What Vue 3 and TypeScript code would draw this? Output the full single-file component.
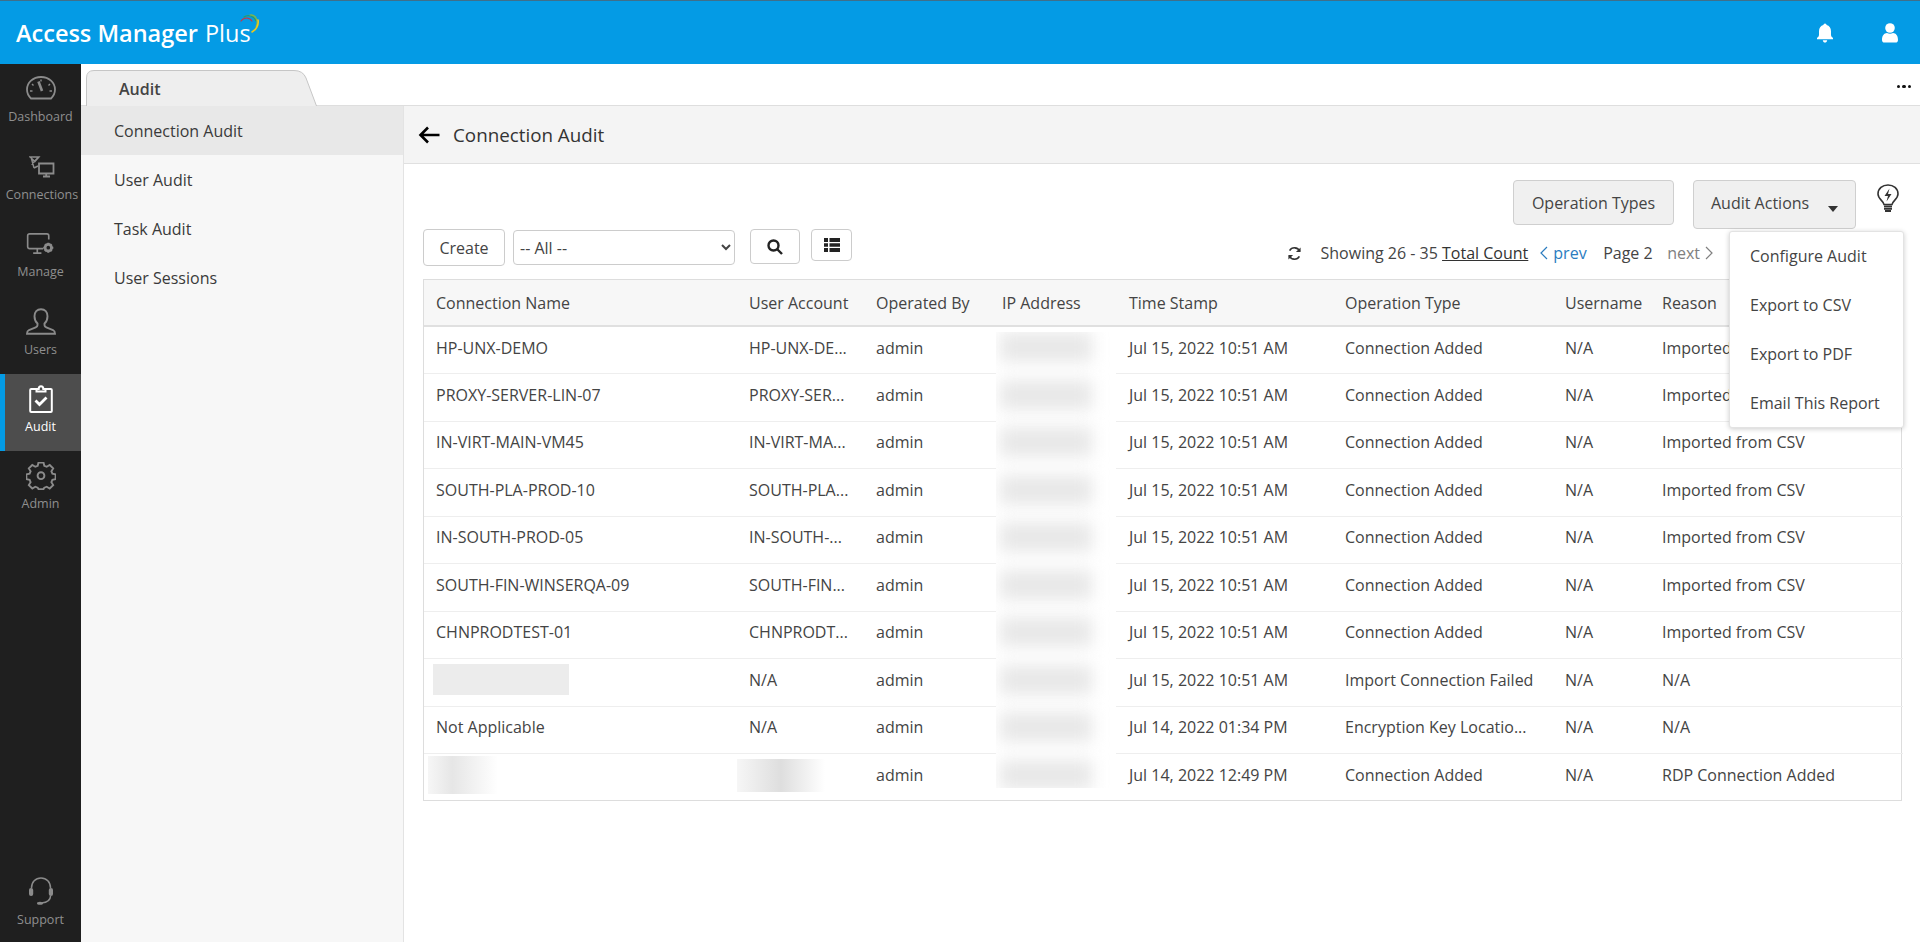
<script setup lang="ts">
interface Row {
  name: string
  account: string
  by: string
  time: string
  op: string
  user: string
  reason: string
  nameBlur?: string
  accountBlur?: boolean
}
const columns = ['Connection Name', 'User Account', 'Operated By', 'IP Address', 'Time Stamp', 'Operation Type', 'Username', 'Reason']
const widths = [313, 127, 126, 127, 216, 220, 97, 253]
const added = { by: 'admin', time: 'Jul 15, 2022 10:51 AM', op: 'Connection Added', user: 'N/A', reason: 'Imported from CSV' }
const rows: Row[] = [
  { name: 'HP-UNX-DEMO', account: 'HP-UNX-DE...', ...added },
  { name: 'PROXY-SERVER-LIN-07', account: 'PROXY-SER...', ...added },
  { name: 'IN-VIRT-MAIN-VM45', account: 'IN-VIRT-MA...', ...added },
  { name: 'SOUTH-PLA-PROD-10', account: 'SOUTH-PLA...', ...added },
  { name: 'IN-SOUTH-PROD-05', account: 'IN-SOUTH-...', ...added },
  { name: 'SOUTH-FIN-WINSERQA-09', account: 'SOUTH-FIN...', ...added },
  { name: 'CHNPRODTEST-01', account: 'CHNPRODT...', ...added },
  { name: '', nameBlur: 'wide', account: 'N/A', by: 'admin', time: 'Jul 15, 2022 10:51 AM', op: 'Import Connection Failed', user: 'N/A', reason: 'N/A' },
  { name: 'Not Applicable', account: 'N/A', by: 'admin', time: 'Jul 14, 2022 01:34 PM', op: 'Encryption Key Locatio...', user: 'N/A', reason: 'N/A' },
  { name: '', nameBlur: 'short', account: '', accountBlur: true, by: 'admin', time: 'Jul 14, 2022 12:49 PM', op: 'Connection Added', user: 'N/A', reason: 'RDP Connection Added' },
]
const menu = ['Connection Audit', 'User Audit', 'Task Audit', 'User Sessions']
const actions = ['Configure Audit', 'Export to CSV', 'Export to PDF', 'Email This Report']
</script>

<template>
  <div class="app">
    <header class="topbar">
      <div class="logo">
        <span class="logo-main">Access Manager</span>
        <span class="logo-plus">Plus</span>
        <svg class="logo-arc" viewBox="0 0 20 20" width="20" height="20" fill="none" stroke-linecap="round">
          <path d="M1 7C4 3 9 3 12 7" stroke="#c8354a" stroke-width="1.2" />
          <path d="M4 3C8 0 14 2 16 7" stroke="#2e9c63" stroke-width="1.2" />
          <path d="M10 1C15 0 19 6 16 13" stroke="#8cb83a" stroke-width="1.2" />
          <path d="M18 6C19 11 16 16 12 18" stroke="#f0c91c" stroke-width="1.6" />
        </svg>
      </div>
      <div class="top-icons">
        <svg viewBox="0 0 18 20" width="18" height="20" fill="#fff">
          <path d="M9 0.5a1.6 1.6 0 0 1 1.6 1.6C13.4 2.8 15 5.2 15 8.2v3.6c0 1.6.9 2.4 2 3.2v1.2H1V15c1.1-.8 2-1.6 2-3.2V8.2C3 5.2 4.6 2.8 7.4 2.1A1.6 1.6 0 0 1 9 .5zM6.8 17.2h4.4C11 18.6 10.100 19.500 9 19.500S7 18.600 6.800 17.200z" />
        </svg>
        <svg viewBox="0 0 18 20" width="18" height="20" fill="#fff">
          <circle cx="9" cy="5" r="4.800" />
          <path d="M1 17c0-4.500 2.200-6.800 5-7 1.800 1 4.200 1 6 0 2.800.2 5 2.500 5 7 0 1.700-1 2.600-2.500 2.600h-11C2 19.600 1 18.700 1 17z" />
        </svg>
      </div>
    </header>

    <div class="body">
      <nav class="rail">
        <a class="rail-item wide-gap">
          <svg viewBox="0 0 30 24" width="30" height="24" fill="none" stroke="#8b8b8b" stroke-width="1.800">
            <path d="M5 22.500C2.500 20 1 17 1 13.500 1 6.500 7 1 15 1s14 5.500 14 12.500c0 3.500-1.500 6.500-4 9z" />
            <path d="M12.500 5.500l3.500 9.500" stroke-width="2.600" />
            <path d="M6 8l1.500 1.500M24 8l-1.500 1.500M4 15h2.500M26 15h-2.500M15 3.500v2" stroke-width="1.400" />
          </svg>
          <span>Dashboard</span>
        </a>
        <a class="rail-item wide-gap nudged">
          <svg viewBox="0 0 26 22" width="26" height="22" fill="none" stroke="#8b8b8b" stroke-width="1.400">
            <path d="M1 1h9L6 5.500zM2 1l3 11M9.500 1L2.500 8.500M5 12l4-2" />
            <path d="M10 7.500h14.500v10H10zM14 20.500h7M17.200 17.500v3" stroke-width="1.800" />
          </svg>
          <span>Connections</span>
        </a>
        <a class="rail-item wide-gap">
          <svg viewBox="0 0 30 24" width="29" height="22" fill="none" stroke="#8b8b8b" stroke-width="1.800">
            <path d="M18 17H3a2 2 0 0 1-2-2V3a2 2 0 0 1 2-2h19a2 2 0 0 1 2 2v4" />
            <path d="M7 22h9M11.500 17v5" />
            <circle cx="23.500" cy="16" r="3.500" stroke-width="3" />
            <path d="M23.500 10.500v2M23.500 19.500v2M18 16h2M27 16h2M19.800 12.300l1.300 1.300M26 18.500l1.300 1.300M27.200 12.300l-1.300 1.300M21 18.500l-1.300 1.300" stroke-width="2.200" />
          </svg>
          <span>Manage</span>
        </a>
        <a class="rail-item">
          <svg viewBox="0 0 30 28" width="30" height="28" fill="none" stroke="#8b8b8b" stroke-width="1.900">
            <path d="M15 1.200c-4 0-6.500 3-6.500 7 0 3 1 5.500 3 7.300v1.800c0 1-.6 1.500-1.800 2L3 22c-1.500.7-2 1.700-2 3.800h28c0-2.100-.5-3.100-2-3.800l-6.700-2.700c-1.200-.5-1.800-1-1.800-2v-1.800c2-1.800 3-4.300 3-7.300 0-4-2.500-7-6.500-7z" />
          </svg>
          <span>Users</span>
        </a>
        <a class="rail-item active">
          <svg viewBox="0 0 24 28" width="24" height="28" fill="none" stroke="#fff" stroke-width="2">
            <path d="M7.500 4H2.200a1 1 0 0 0-1 1v21a1 1 0 0 0 1 1h19.600a1 1 0 0 0 1-1V5a1 1 0 0 0-1-1h-5.300" />
            <path d="M7.500 6.500V4h2.200c0-3.600 4.600-3.600 4.600 0h2.200v2.500z" />
            <path d="M6.500 15.500l4 4 7-7" stroke-width="2.800" />
          </svg>
          <span>Audit</span>
        </a>
        <a class="rail-item">
          <svg viewBox="0 0 30 28" width="30" height="28" fill="none" stroke="#8b8b8b" stroke-width="1.900">
            <path d="M12.500 1h5l.8 3.400 2.400 1 3-1.800 3.500 3.500-1.800 3 1 2.400 3.200.8v4.800l-3.200.8-1 2.400 1.800 3-3.500 3.500-3-1.800-2.400 1-.8 1.400h-5l-.8-1.400-2.400-1-3 1.800-3.500-3.500 1.800-3-1-2.400-3.200-.8v-4.800l3.200-.8 1-2.400-1.800-3 3.500-3.500 3 1.800 2.400-1z" transform="translate(0 -.500) scale(1 .97)" />
            <circle cx="15" cy="13.700" r="3.400" />
          </svg>
          <span>Admin</span>
        </a>
        <a class="rail-item support">
          <svg viewBox="0 0 26 29" width="26" height="29" fill="none" stroke="#8b8b8b" stroke-width="1.500">
            <path d="M3.500 11C3.500 5 7.500 1 13 1s9.500 4 9.500 10" />
            <rect x="1" y="11" width="4.200" height="8" rx="2" fill="#8b8b8b" stroke="none" />
            <rect x="20.800" y="11" width="4.200" height="8" rx="2" fill="#8b8b8b" stroke="none" />
            <path d="M22.500 19c0 4-3.500 6.500-9 7" />
            <ellipse cx="12" cy="26.200" rx="3" ry="1.500" fill="#8b8b8b" stroke="none" />
          </svg>
          <span>Support</span>
        </a>
      </nav>

      <div class="workspace">
        <div class="tabstrip">
          <div class="tab">
            <svg class="tab-shape" viewBox="0 0 231 36" width="231" height="36">
              <path d="M.5 36V8Q.5.500 8 .500H208Q217 .500 220 8L230.500 36" fill="#eeeeee" stroke="#c6c6c6" />
            </svg>
            <span class="tab-label">Audit</span>
          </div>
          <span class="more"><i></i><i></i><i></i></span>
        </div>

        <div class="panes">
          <aside class="menu">
            <a v-for="(m, i) in menu" :key="m" class="menu-item" :class="{ selected: i === 0 }">{{ m }}</a>
          </aside>

          <main class="content">
            <div class="title-bar">
              <svg viewBox="0 0 22 18" width="22" height="18" fill="none" stroke="#000" stroke-width="2.600">
                <path d="M21.500 9H3M10 1.500L2.500 9l7.500 7.500" />
              </svg>
              <h1>Connection Audit</h1>
            </div>

            <div class="inner">
              <div class="action-row">
                <button class="grey-btn op-btn">Operation Types</button>
                <div class="actions-wrap">
                  <button class="grey-btn actions-btn">Audit Actions<span class="caret"></span></button>
                  <ul class="dropdown">
                    <li v-for="a in actions" :key="a">{{ a }}</li>
                  </ul>
                </div>
                <svg class="bulb" viewBox="0 0 22 28" width="22" height="28" fill="none" stroke="#333" stroke-width="1.600">
                  <path d="M7 20.500C6.500 17 1 15 1 10 1 4.500 5.500 1 11 1s10 3.500 10 9c0 5-5.500 7-6 10.500z" />
                  <path d="M12.500 4.500L7.500 12h3.500l-1.500 5.500 5-7.500h-3.500z" fill="#333" stroke="none" />
                  <path d="M7 22.500h8M7 24.800h8M8 27h6" stroke-width="1.800" />
                </svg>
              </div>

              <div class="toolbar">
                <div class="tools">
                  <button class="white-btn create">Create</button>
                  <select class="filter"><option>-- All --</option></select>
                  <button class="white-btn search" aria-label="Search">
                    <svg viewBox="0 0 16 16" width="16" height="16" fill="none" stroke="#222" stroke-width="2.400">
                      <circle cx="6.500" cy="6.500" r="5" /><path d="M10.500 10.500L15 15" />
                    </svg>
                  </button>
                  <button class="white-btn list" aria-label="Columns">
                    <svg viewBox="0 0 16 14" width="16" height="14" fill="#222">
                      <path d="M0 0h4v4H0zM5.500 0H16v4H5.500zM0 5.200h4v3.600H0zM5.500 5.200H16v3.600H5.500zM0 10h4v4H0zM5.500 10H16v4H5.500z" />
                    </svg>
                  </button>
                </div>
                <div class="pager">
                  <svg viewBox="0 0 16 16" width="15" height="15" fill="none" stroke="#333" stroke-width="1.700">
                    <path d="M13.500 5.500A6 6 0 0 0 2.800 5M2.500 10.500A6 6 0 0 0 13.200 11" />
                    <path d="M14.500 1.500v5h-5zM1.500 14.500v-5h5z" fill="#333" stroke="none" />
                  </svg>
                  <span class="showing">Showing 26 - 35 <u>Total Count</u></span>
                  <a class="prev">
                    <svg viewBox="0 0 8 14" width="8" height="14" fill="none" stroke="currentColor" stroke-width="1.200"><path d="M7 1L1 7l6 6" /></svg>
                    prev
                  </a>
                  <span class="page">Page 2</span>
                  <a class="next">
                    next
                    <svg viewBox="0 0 8 14" width="8" height="14" fill="none" stroke="currentColor" stroke-width="1.200"><path d="M1 1l6 6-6 6" /></svg>
                  </a>
                </div>
              </div>

              <div class="table-wrap">
                <table>
                  <colgroup>
                    <col v-for="(w, i) in widths" :key="i" :style="{ width: w + 'px' }" />
                  </colgroup>
                  <thead>
                    <tr><th v-for="c in columns" :key="c">{{ c }}</th></tr>
                  </thead>
                  <tbody>
                    <tr v-for="(r, i) in rows" :key="i">
                      <td>
                        <span v-if="r.nameBlur" class="smudge" :class="r.nameBlur"></span>
                        <template v-else>{{ r.name }}</template>
                      </td>
                      <td>
                        <span v-if="r.accountBlur" class="smudge account"></span>
                        <template v-else>{{ r.account }}</template>
                      </td>
                      <td>{{ r.by }}</td>
                      <td></td>
                      <td>{{ r.time }}</td>
                      <td>{{ r.op }}</td>
                      <td>{{ r.user }}</td>
                      <td>{{ r.reason }}</td>
                    </tr>
                  </tbody>
                </table>
                <div class="ip-mask">
                  <i v-for="n in 10" :key="n"></i>
                </div>
              </div>
            </div>
          </main>
        </div>
      </div>
    </div>
  </div>
</template>

<style>
html, body { margin: 0; height: 100%; overflow: hidden; background: #fff; }
</style>

<style scoped>
.app {
  height: 942px;
  display: flex;
  flex-direction: column;
  font-family: "Open Sans", sans-serif;
  font-size: 16px;
  color: #444;
}
.topbar {
  height: 64px;
  box-sizing: border-box;
  border-top: 1px solid #3f6f8a;
  background: #049be5;
  display: flex;
  align-items: center;
  justify-content: space-between;
  flex: none;
}
.logo {
  position: relative;
  margin-left: 16px;
  color: #fff;
  font-size: 23.5px;
  line-height: 30px;
  display: flex;
  gap: 7px;
}
.logo-main { font-weight: 600; }
.logo-plus { font-weight: 400; }
.logo-arc { position: absolute; left: 224px; top: -4px; }
.top-icons {
  display: flex;
  gap: 47px;
  margin-right: 21px;
}
.body { flex: 1; display: flex; min-height: 0; }
.rail {
  width: 81px;
  flex: none;
  background: #1f1f1f;
  display: flex;
  flex-direction: column;
}
.rail-item {
  height: 77.4px;
  box-sizing: border-box;
  display: flex;
  flex-direction: column;
  align-items: center;
  justify-content: flex-end;
  padding-bottom: 16px;
  gap: 6px;
  color: #8f8f8f;
  font-size: 12.5px;
  line-height: 16px;
  white-space: nowrap;
}
.rail-item.wide-gap { gap: 9px; }
.rail-item.nudged { padding-left: 3px; }
.rail-item.active {
  background: #4d4d4d;
  border-left: 5px solid #049be5;
  color: #fff;
  padding-right: 5px;
}
.rail-item.support { margin-top: auto; height: 72px; padding-bottom: 14px; }
.workspace { flex: 1; min-width: 0; display: flex; flex-direction: column; }
.tabstrip {
  height: 42px;
  flex: none;
  box-sizing: border-box;
  border-bottom: 1px solid #dedede;
  display: flex;
  align-items: flex-end;
  justify-content: space-between;
  padding-left: 5px;
}
.tab {
  position: relative;
  width: 231px;
  height: 35px;
}
.tab-shape { position: absolute; left: 0; top: 0; }
.tab-label {
  position: absolute;
  left: 33px;
  top: 9px;
  font-size: 16px;
  font-weight: 600;
  line-height: 20px;
  color: #444;
}
.more {
  display: flex;
  gap: 2px;
  margin: 0 9px 17px 0;
}
.more i { width: 3.5px; height: 3.5px; background: #111; border-radius: 50%; }
.panes { flex: 1; display: flex; min-height: 0; }
.menu {
  width: 323px;
  flex: none;
  background: #f7f7f7;
  border-right: 1px solid #e3e3e3;
  box-sizing: border-box;
}
.menu-item {
  display: flex;
  align-items: center;
  height: 48.9px;
  padding: 1px 0 0 33px;
  box-sizing: border-box;
  font-size: 16px;
  color: #3a3a3a;
}
.menu-item.selected { background: #e8e8e8; }
.content { flex: 1; min-width: 0; display: flex; flex-direction: column; }
.title-bar {
  height: 58px;
  flex: none;
  box-sizing: border-box;
  background: #f4f4f4;
  border-bottom: 1px solid #e0e0e0;
  display: flex;
  align-items: center;
  padding-left: 14px;
  gap: 13px;
}
.title-bar h1 {
  margin: 0;
  font-size: 18.8px;
  font-weight: 400;
  color: #333;
}
.inner { padding: 16px 18px 0 19px; }
.action-row {
  display: flex;
  align-items: flex-start;
  justify-content: flex-end;
  height: 49px;
}
.grey-btn {
  font: inherit;
  color: #444;
  background: #f0f0f0;
  border: 1px solid #cfcfcf;
  border-radius: 4px;
  padding: 0;
}
.op-btn { width: 161px; height: 45px; margin-right: 19px; }
.actions-wrap { position: relative; margin-right: 21px; }
.actions-btn {
  width: 163px;
  height: 49px;
  display: flex;
  align-items: center;
  padding: 0 0 4px 17px;
  box-sizing: border-box;
}
.caret {
  margin: 12px 0 0 19px;
  border: 5.5px solid transparent;
  border-top: 6px solid #333;
  border-bottom: 0;
}
.dropdown {
  position: absolute;
  z-index: 5;
  left: 36px;
  top: 51px;
  width: 175px;
  height: 197px;
  box-sizing: border-box;
  margin: 0;
  padding: 0;
  list-style: none;
  background: #fff;
  border: 1px solid #e3e3e3;
  border-radius: 3px;
  box-shadow: 0 1px 5px rgba(0, 0, 0, .2);
}
.dropdown li {
  height: 49px;
  padding-left: 20px;
  display: flex;
  align-items: center;
  white-space: nowrap;
  position: relative;
  top: -1px;
}
.bulb { margin: 4px 3px 0 0; }
.toolbar {
  display: flex;
  justify-content: space-between;
  height: 50px;
}
.tools { display: flex; align-items: flex-start; }
.white-btn {
  font: inherit;
  color: #444;
  background: #fff;
  border: 1px solid #ccc;
  border-radius: 4px;
  padding: 0;
  display: flex;
  align-items: center;
  justify-content: center;
}
.create { width: 82px; height: 37px; }
.filter {
  width: 222px;
  height: 35px;
  margin: 1px 15px 0 8px;
  font: inherit;
  color: #444;
  background: #fff;
  border: 1px solid #ccc;
  border-radius: 4px;
  padding-left: 2px;
}
.search { width: 50px; height: 35px; margin-right: 11px; }
.list { width: 41px; height: 32px; }
.pager {
  display: flex;
  align-items: center;
  height: 48px;
  padding-right: 189px;
  color: #444;
  white-space: nowrap;
}
.showing { margin-left: 19px; }
.showing u { color: #333; }
.prev {
  margin-left: 12px;
  color: #2b7cbf;
  display: flex;
  align-items: center;
  gap: 5px;
}
.page { margin-left: 16.5px; color: #444; }
.next {
  margin-left: 14.5px;
  color: #808080;
  display: flex;
  align-items: center;
  gap: 5px;
}
.table-wrap {
  position: relative;
  border: 1px solid #dddddd;
  box-sizing: border-box;
  height: 522px;
}
table {
  table-layout: fixed;
  border-collapse: collapse;
  width: 100%;
}
th {
  height: 46px;
  padding: 0 0 0 12px;
  box-sizing: border-box;
  background: #f7f7f7;
  border-bottom: 2px solid #e0e0e0;
  font-weight: 400;
  text-align: left;
  color: #444;
  white-space: nowrap;
}
td {
  height: 47.5px;
  box-sizing: border-box;
  padding: 0 0 5px 12px;
  border-bottom: 1px solid #eeeeee;
  white-space: nowrap;
  overflow: hidden;
  color: #444;
}
tbody tr:last-child td { border-bottom: 0; }
.smudge { display: block; height: 31px; }
.smudge.wide {
  width: 136px;
  margin-left: -3px;
  background: #ececec;
  filter: blur(.6px);
}
.smudge.short {
  width: 70px;
  margin-left: -8px;
  height: 38px;
  background: linear-gradient(90deg, #f6f6f6, #e6e6e6 35%, #fff 100%);
}
.smudge.account {
  width: 88px;
  margin-left: -12px;
  height: 33px;
  background: linear-gradient(90deg, #f6f6f6, #dedede 50%, #fff 100%);
}
.ip-mask {
  position: absolute;
  left: 572px;
  top: 52px;
  width: 120px;
  height: 456px;
  background: #fff;
  overflow: hidden;
  display: flex;
  flex-direction: column;
  gap: 17.5px;
  box-sizing: border-box;
}
.ip-mask i {
  display: block;
  flex: none;
  width: 92px;
  height: 30px;
  margin-left: 4px;
  background: #e8e8e8;
  filter: blur(8px);
}
</style>
